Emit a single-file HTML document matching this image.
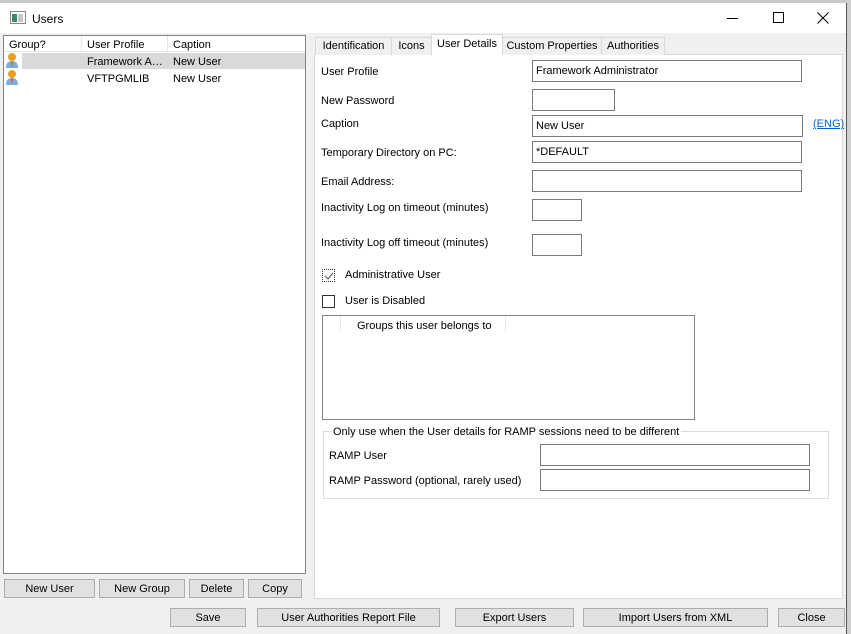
<!DOCTYPE html>
<html><head><style>
*{box-sizing:border-box;margin:0;padding:0}
body{width:851px;height:634px;overflow:hidden;background:#f0f0f0;font-family:"Liberation Sans",sans-serif;font-size:11px;color:#000;position:relative}
.a{position:absolute}
.in{position:absolute;background:#fff;border:1px solid #7a7a7a;height:22px;padding:0 3px;line-height:20px;font-size:11px}
.lbl{position:absolute;font-size:11px;white-space:nowrap}
.btn{position:absolute;background:#e1e1e1;border:1px solid #adadad;height:19px;text-align:center;line-height:18px;font-size:11px}
.tab{position:absolute;top:37px;height:18px;background:#f0f0f0;border:1px solid #d9d9d9;border-bottom:none;text-align:center;line-height:17px;font-size:11px}
.cb{position:absolute;width:13px;height:13px;border:1px solid #333;background:#fff}
.usr{position:absolute;width:14px;height:16px}
</style></head><body>
<div class="a" style="left:0;top:0;width:851px;height:3px;background:#c9c9c9"></div>
<div class="a" style="left:0;top:3px;width:847px;height:631px;background:#f0f0f0;border-right:1px solid #555"></div>
<div class="a" style="left:0;top:3px;width:846px;height:30px;background:#fff"></div>
<div class="a" style="left:847px;top:0;width:4px;height:634px;background:#d0d0d0"></div>
<svg class="a" style="left:10px;top:11px" width="16" height="14"><rect x="0.5" y="0.5" width="15" height="12" fill="#fff" stroke="#888"/><rect x="2" y="3" width="5" height="8" fill="#3a8a6a"/><rect x="8" y="3" width="5" height="8" fill="#c8c8c8"/></svg>
<div class="lbl" style="left:32px;top:12px;font-size:12px">Users</div>
<div class="a" style="left:727px;top:18px;width:11px;height:1px;background:#000"></div>
<div class="a" style="left:773px;top:12px;width:11px;height:11px;border:1px solid #000"></div>
<svg class="a" style="left:817px;top:12px" width="12" height="12"><path d="M0.5 0.5L11.5 11.5M11.5 0.5L0.5 11.5" stroke="#000" stroke-width="1"/></svg>

<div class="a" style="left:3px;top:35px;width:303px;height:539px;background:#fff;border:1px solid #828282"></div>
<div class="a" style="left:4px;top:36px;width:301px;height:16px;background:#fff;border-bottom:1px solid #e5e5e5"></div>
<div class="a" style="left:81px;top:36px;width:1px;height:16px;background:#e5e5e5"></div>
<div class="a" style="left:167px;top:36px;width:1px;height:16px;background:#e5e5e5"></div>
<div class="lbl" style="left:9px;top:39px">Group?</div>
<div class="lbl" style="left:87px;top:39px">User Profile</div>
<div class="lbl" style="left:173px;top:39px">Caption</div>
<div class="a" style="left:22px;top:53px;width:283px;height:16px;background:#d9d9d9"></div>
<div class="lbl" style="left:87px;top:56px">Framework A…</div>
<div class="lbl" style="left:173px;top:56px">New User</div>
<div class="lbl" style="left:87px;top:73px">VFTPGMLIB</div>
<div class="lbl" style="left:173px;top:73px">New User</div>
<svg class="usr" style="left:5px;top:52px"><circle cx="7" cy="5" r="4" fill="#e8a020"/><path d="M1 16Q1 9 7 9Q13 9 13 16Z" fill="#7aaee0"/><path d="M6 10L7 15L8 10Z" fill="#e06010"/></svg>
<svg class="usr" style="left:5px;top:69px"><circle cx="7" cy="5" r="4" fill="#e8a020"/><path d="M1 16Q1 9 7 9Q13 9 13 16Z" fill="#7aaee0"/><path d="M6 10L7 15L8 10Z" fill="#e06010"/></svg>

<div class="btn" style="left:4px;top:579px;width:91px">New User</div>
<div class="btn" style="left:99px;top:579px;width:86px">New Group</div>
<div class="btn" style="left:189px;top:579px;width:55px">Delete</div>
<div class="btn" style="left:248px;top:579px;width:54px">Copy</div>

<div class="a" style="left:314px;top:54px;width:529px;height:545px;background:#fff;border:1px solid #d9d9d9"></div>
<div class="tab" style="left:315px;width:77px">Identification</div>
<div class="tab" style="left:391px;width:41px">Icons</div>
<div class="tab" style="left:431px;top:34px;height:21px;width:72px;background:#fff;line-height:19px">User Details</div>
<div class="tab" style="left:502px;width:100px">Custom Properties</div>
<div class="tab" style="left:601px;width:64px">Authorities</div>

<div class="lbl" style="left:321px;top:66px">User Profile</div>
<div class="in" style="left:532px;top:60px;width:270px">Framework Administrator</div>
<div class="lbl" style="left:321px;top:95px">New Password</div>
<div class="in" style="left:532px;top:89px;width:83px"></div>
<div class="lbl" style="left:321px;top:118px">Caption</div>
<div class="in" style="left:532px;top:115px;width:271px">New User</div>
<div class="lbl" style="left:813px;top:118px;color:#0066cc;text-decoration:underline">(ENG)</div>
<div class="lbl" style="left:321px;top:147px">Temporary Directory on PC:</div>
<div class="in" style="left:532px;top:141px;width:270px">*DEFAULT</div>
<div class="lbl" style="left:321px;top:176px">Email Address:</div>
<div class="in" style="left:532px;top:170px;width:270px"></div>
<div class="lbl" style="left:321px;top:202px">Inactivity Log on timeout (minutes)</div>
<div class="in" style="left:532px;top:199px;width:50px"></div>
<div class="lbl" style="left:321px;top:237px">Inactivity Log off timeout (minutes)</div>
<div class="in" style="left:532px;top:234px;width:50px"></div>
<div class="cb" style="left:322px;top:269px;border:1px dotted #333"></div>
<svg class="a" style="left:324px;top:271px" width="10" height="10"><path d="M1 5L4 8L9 2" stroke="#555" fill="none"/></svg>
<div class="lbl" style="left:345px;top:269px">Administrative User</div>
<div class="cb" style="left:322px;top:295px"></div>
<div class="lbl" style="left:345px;top:295px">User is Disabled</div>

<div class="a" style="left:322px;top:315px;width:373px;height:105px;border:1px solid #828282;background:#fff"></div>
<div class="a" style="left:340px;top:316px;width:1px;height:15px;background:#e5e5e5"></div>
<div class="a" style="left:505px;top:316px;width:1px;height:15px;background:#e5e5e5"></div>
<div class="lbl" style="left:357px;top:320px">Groups this user belongs to</div>

<div class="a" style="left:323px;top:431px;width:506px;height:68px;border:1px solid #dcdcdc"></div>
<div class="lbl" style="left:331px;top:426px;background:#fff;padding:0 2px">Only use when the User details for RAMP sessions need to be different</div>
<div class="lbl" style="left:329px;top:450px">RAMP User</div>
<div class="in" style="left:540px;top:444px;width:270px"></div>
<div class="lbl" style="left:329px;top:475px">RAMP Password (optional, rarely used)</div>
<div class="in" style="left:540px;top:469px;width:270px"></div>

<div class="btn" style="left:170px;top:608px;width:76px">Save</div>
<div class="btn" style="left:257px;top:608px;width:183px">User Authorities Report File</div>
<div class="btn" style="left:455px;top:608px;width:119px">Export Users</div>
<div class="btn" style="left:583px;top:608px;width:185px">Import Users from XML</div>
<div class="btn" style="left:778px;top:608px;width:67px">Close</div>
</body></html>
